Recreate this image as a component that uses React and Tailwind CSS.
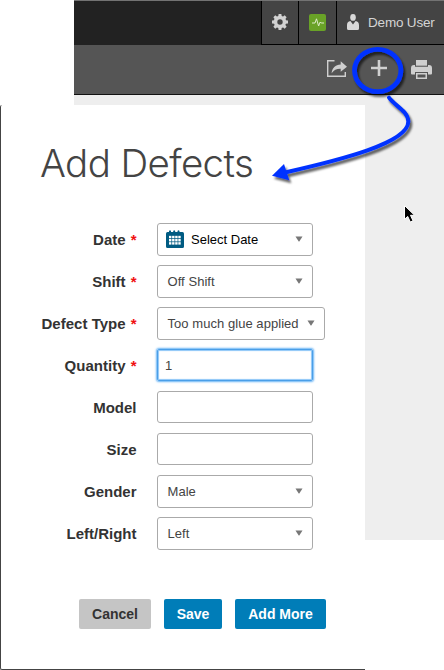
function GearIcon() {
  const teeth = [0, 45, 90, 135, 180, 225, 270, 315];
  return (
    <svg width="16" height="16" viewBox="0 0 16 16" fill="#d2d2d2">
      {teeth.map((a) => (
        <path key={a} d="M6.2 3 L6.600 0 H9.400 L9.800 3 Z" transform={`rotate(${a} 8 8)`} />
      ))}
      <path fillRule="evenodd" d="M8 1.8a6.2 6.2 0 1 0 0 12.4A6.2 6.2 0 0 0 8 1.8ZM8 5.3a2.7 2.7 0 1 1 0 5.4A2.7 2.7 0 0 1 8 5.3Z" />
    </svg>
  );
}

function PulseIcon() {
  return (
    <svg width="17" height="17" viewBox="0 0 17 17">
      <rect width="17" height="17" rx="2" fill="#69a227" />
      <path d="M3 9h3l1.5-4.2L9.6 12l1.6-4 1 1H15" fill="none" stroke="#dcebc8" strokeWidth="1" />
    </svg>
  );
}

function UserIcon() {
  return (
    <svg className="mb-px" width="12" height="16" viewBox="0 0 12 16" fill="#d8d8d8">
      <ellipse cx="6" cy="3.4" rx="2.8" ry="3.4" />
      <path d="M3.4 7 6 10.6 8.6 7C10.8 7.4 12 8.600 12 11v3.500q0 1.500-1.500 1.500h-9Q0 16 0 14.500V11C0 8.600 1.200 7.400 3.400 7Z" />
    </svg>
  );
}

function ShareIcon() {
  return (
    <svg className="mb-[2px]" width="20" height="17" viewBox="0 0 20 17">
      <path d="M7.500 .7H.7v15.600h17.600V12" fill="none" stroke="#cfcfcf" strokeWidth="1.400" />
      <path d="M13.700 1.200 20 6.700 13.700 11.800V8.700C9.500 8.600 7 10 4.600 13.200 5.100 8.200 8.300 4.600 13.700 4.400Z" fill="#cfcfcf" />
    </svg>
  );
}

function PrintIcon() {
  return (
    <svg width="21" height="19" viewBox="0 0 21 19" fill="#cfcfcf">
      <path d="M5 0h11v5.700H5Z" />
      <path d="M3 5h1v1.800h13V5h1q3 0 3 3v5.500q0 1-1 1h-3V12H4v2.500H1q-1 0-1-1V8q0-3 3-3Z" />
      <path fillRule="evenodd" d="M5 13h11v6H5Zm1.500 1.500v3h8v-3Z" />
    </svg>
  );
}

function CalendarIcon() {
  return (
    <svg className="mb-[2px]" width="18" height="18" viewBox="0 0 18 17" preserveAspectRatio="none">
      <path d="M1.500 2H3V1q1-1.500 2 0v1h2.200V1q1-1.500 2 0v1h2.300V1q1-1.500 2 0v1h3Q18 2 18 3.500v12Q18 17 16.500 17h-15Q0 17 0 15.500v-12Q0 2 1.500 2Z" fill="#005b82" />
      {[5.500, 8.500, 11.500].map((y) =>
        [3, 6.100, 9.200, 12.300].map((x) => <rect key={`${x}-${y}`} x={x} y={y} width="2.400" height="2.300" fill="#fff" />)
      )}
    </svg>
  );
}

function Caret() {
  return (
    <svg className="mb-px shrink-0" width="8" height="6" viewBox="0 0 8 6">
      <path d="M.5.5h7L4.300 5.500h-.6Z" fill="#777" />
    </svg>
  );
}

function Row({ label, required, children }) {
  return (
    <div className="flex h-[42px] items-start">
      <div className="h-[33px] w-[135.500px] whitespace-nowrap text-right text-[15px] font-bold leading-[33px] text-[#333]">
        <span className={required ? "mr-[5px] tracking-[0.030px]" : ""}>{label}</span>
        {required && <span className="text-[#f01010]">*</span>}
      </div>
      <div className="ml-[20.500px]">{children}</div>
    </div>
  );
}

function Select({ wide, children }) {
  return (
    <div className={`flex h-[33px] items-center justify-between rounded-[3px] border border-[#aaa] pl-[9.500px] pr-[9px] text-[13px] tracking-[0.050px] text-[#444] ${wide ? "w-[168px]" : "w-[156px]"}`}>
      <span className="whitespace-nowrap">{children}</span>
      <Caret />
    </div>
  );
}

function Annotation() {
  return (
    <svg className="pointer-events-none absolute left-0 top-0" width="444" height="670" viewBox="0 0 444 670">
      <defs>
        <filter id="shade" x="-20%" y="-20%" width="150%" height="150%">
          <feDropShadow dx="2" dy="3" stdDeviation="1.300" floodColor="#000" floodOpacity="0.6" />
        </filter>
      </defs>
      <g filter="url(#shade)">
        <ellipse cx="377.700" cy="70.500" rx="23.200" ry="21.200" fill="none" stroke="#0433ff" strokeWidth="4.800" />
      </g>
      <g filter="url(#shade)">
        <path d="M389 97.700C395 106 408 111 408.300 121.500C408.500 143 340 160 285 172.500" fill="none" stroke="#0433ff" strokeWidth="4" strokeLinecap="round" />
        <path d="M272 175.700 284 164 289.300 180.300Z" fill="#0433ff" />
      </g>
      <path d="M404.500 205.500V219.300L407.700 216.400 410.300 222 413 220.800 410.500 215.300H414.600Z" fill="#000" stroke="#fff" strokeWidth="1" />
    </svg>
  );
}

export default function App() {
  return (
    <div className="relative h-[670px] w-[444px] overflow-hidden bg-white font-['Liberation_Sans',Arial,sans-serif]">
      <header className="ml-[74px]">
        <div className="flex h-[45px] justify-end border-t border-[#737373] bg-[#222]">
          <div className="flex w-[37px] items-center justify-center border-b border-l border-black bg-[#444] pb-px"><GearIcon /></div>
          <div className="flex w-[38px] items-center justify-center border-b border-l border-black bg-[#444] pb-px"><PulseIcon /></div>
          <div className="flex w-[108px] items-center border-b border-l border-black bg-[#444] pl-[10px]">
            <UserIcon />
            <span className="ml-[9px] mt-[2px] whitespace-nowrap text-[13.500px] tracking-[-0.180px] text-[#d4d4d4]">Demo User</span>
          </div>
        </div>
        <div className="flex h-[50px] items-center justify-end border-b border-[#111] bg-[#555] pr-[12px]">
          <ShareIcon />
          <svg className="mb-[3px] ml-[24px] mr-[24px]" width="16" height="16" viewBox="0 0 16 16">
            <path d="M8 0v16M0 8h16" stroke="#d0d0d0" strokeWidth="2.600" />
          </svg>
          <PrintIcon />
        </div>
        <div className="h-[10px] bg-[#eee]" />
      </header>
      <main className="flex items-start">
        <section className="h-[565px] w-[365px] rounded-bl-[2px] rounded-tl-[2px] border-b border-l border-[#444] bg-white">
          <h1 className="ml-[39px] mt-[33px] h-[50px] whitespace-nowrap font-['Inter',sans-serif] text-[38.500px] font-[330] leading-[50px] tracking-[-0.620px] text-[#444]">Add Defects</h1>
          <form className="mt-[35px]">
            <Row label="Date" required>
              <div className="flex h-[33px] w-[156px] items-center rounded-[3px] border border-[#aaa] pl-[8px] pr-[9px] text-[13px] text-black">
                <CalendarIcon />
                <span className="ml-[7px] flex-1 whitespace-nowrap">Select Date</span>
                <Caret />
              </div>
            </Row>
            <Row label="Shift" required><Select>Off Shift</Select></Row>
            <Row label="Defect Type" required><Select wide>Too much glue applied</Select></Row>
            <Row label="Quantity" required>
              <div className="h-[32px] w-[156px] rounded-[2px] border border-[#4a9ee8] pl-[7px] text-[13px] leading-[32px] text-[#444] shadow-[0_0_2px_1px_#66b3f5,inset_0_0_1px_1px_#8cc6f8]">1</div>
            </Row>
            <Row label="Model"><div className="h-[32px] w-[156px] rounded-[3px] border border-[#aaa]" /></Row>
            <Row label="Size"><div className="h-[32px] w-[156px] rounded-[3px] border border-[#aaa]" /></Row>
            <Row label="Gender"><Select>Male</Select></Row>
            <Row label="Left/Right"><Select>Left</Select></Row>
          </form>
          <div className="ml-[78px] mt-[40px] flex gap-[13px] text-sm font-bold text-white">
            <button className="h-[30px] w-[72px] rounded-[2px] bg-[#c5c5c5] text-[#333]">Cancel</button>
            <button className="h-[30px] w-[58px] rounded-[2px] bg-[#007db8]">Save</button>
            <button className="h-[30px] w-[91px] whitespace-nowrap rounded-[2px] bg-[#007db8]">Add More</button>
          </div>
        </section>
        <aside className="h-[435px] w-[79px] bg-[#eee]" />
      </main>
      <Annotation />
    </div>
  );
}
